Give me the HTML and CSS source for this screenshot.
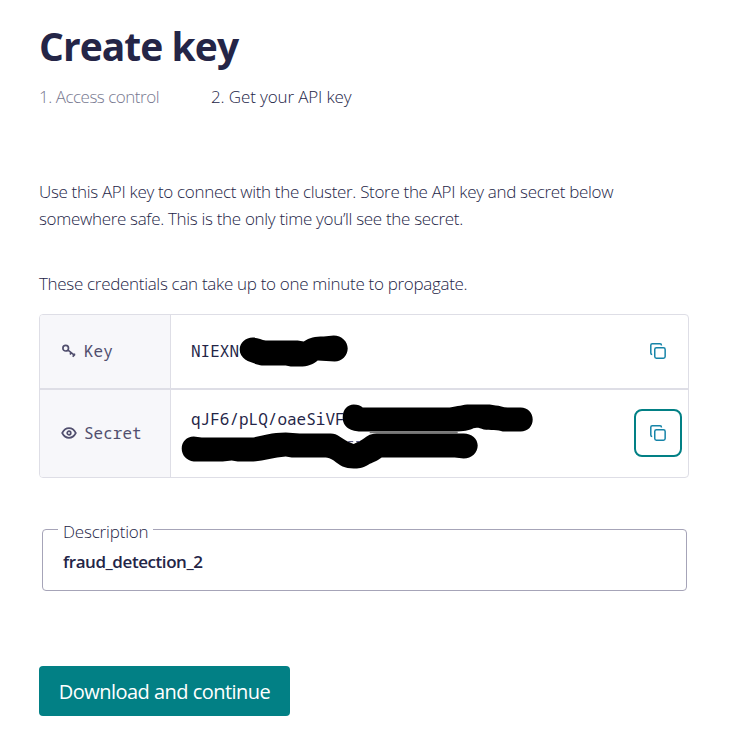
FILE: index.html
```html
<!DOCTYPE html>
<html lang="en">
<head>
<meta charset="utf-8">
<title>Create key</title>
<link rel="stylesheet" href="styles.css">
</head>
<body>
<main class="page">
  <h1 class="title">Create key</h1>
  <nav class="steps">
    <span class="step step-done">1. Access control</span>
    <span class="step">2. Get your API key</span>
  </nav>
  <p class="intro">Use this API key to connect with the cluster. Store the API key and secret below<br>somewhere safe. This is the only time you’ll see the secret.</p>
  <p class="note">These credentials can take up to one minute to propagate.</p>

  <section class="credentials">
    <div class="row row-key">
      <div class="label">
        <svg class="icon" width="16" height="16" viewBox="0 0 16 16" fill="none" stroke="currentColor" stroke-width="1.7"><circle cx="4.7" cy="5.2" r="2.8"/><path d="M7 7.2L13.9 12.7M10.4 9.6L9 11.6M13.8 10.6L11.8 13.8"/></svg>
        <span>Key</span>
      </div>
      <div class="value">
        <code>NIEXN</code>
        <svg class="redaction" width="518" height="73" viewBox="171.3 315.4 518 73"><path d="M240 350C240 343 246 338 253 338C258 338 262 340 266 341H298L304 342C310 338 315 337 324 337L334 336C342 336 348 342 348 349C348 356 342 362 335 362L318 361C313 365 308 367 300 367H291L286 366H262C256 364 240 362 240 350Z"/></svg>
        <button class="copy" type="button" aria-label="Copy key"><svg width="16" height="16" viewBox="0 0 16 16" fill="none" stroke="currentColor" stroke-width="1.5"><rect x="4.75" y="4.75" width="10.4" height="10.4" rx="1.7"/><path d="M2.2 11.5Q.8 11.5.8 10V2.2Q.8.8 2.2.8H10Q11.5.8 11.5 2.4"/></svg></button>
      </div>
    </div>
    <div class="row row-secret">
      <div class="label">
        <svg class="icon" width="16" height="16" viewBox="0 0 16 16" fill="none" stroke="currentColor" stroke-width="1.7"><path d="M1.2 8Q3.7 3.2 8 3.2T14.8 8Q12.3 12.8 8 12.8T1.2 8Z"/><circle cx="8" cy="8" r="1.8"/></svg>
        <span>Secret</span>
      </div>
      <div class="value">
        <code>qJF6/pLQ/oaeSiVF</code>
        <svg class="redaction" width="518" height="87" viewBox="171.3 390.4 518 87"><path d="M343 418C343 410 348 405 354 405C358 405 361 406 363 408H450C458 407 463 405 470 405H490L496 406C500 406 503 408 508 408H521C528 408 533 413 533 420C533 427 528 432 521 432H503C499 430 490 431 484 430C478 427 474 428 471 430C464 432 458 432 452 432H362C355 432 343 430 343 418Z"/><path class="overlap" d="M370 432.9H458"/><path d="M182 449C182 442 187 437 194 437L202 438H251C263 437 270 433 286 433L300 434H331C338 434 342 439 348 442L354 444.5L361 441C367 437 369 434 377 433.8H464C472 434 478 439 478 446C478 453 472 459 464 459L455 458H382C377 462 372 463 369 465C363 469 358 469 354 469C345 469 340 466 334 461C331 459 328 458 326 458H292L286 457C273 458 263 462 251 462H238L232 461L223 462H194C187 461 182 456 182 449Z"/><path class="remnant" d="M348.5 442H353.5M356.5 442H360"/></svg>
        <button class="copy copy-focus" type="button" aria-label="Copy secret"><svg width="16" height="16" viewBox="0 0 16 16" fill="none" stroke="currentColor" stroke-width="1.5"><rect x="4.75" y="4.75" width="10.4" height="10.4" rx="1.7"/><path d="M2.2 11.5Q.8 11.5.8 10V2.2Q.8.8 2.2.8H10Q11.5.8 11.5 2.4"/></svg></button>
      </div>
    </div>
  </section>

  <fieldset class="field">
    <legend>Description</legend>
    <div class="field-value">fraud_detection_2</div>
  </fieldset>

  <button class="primary" type="button">Download and continue</button>
</main>
</body>
</html>
```
FILE: styles.css
```css
* { box-sizing: border-box; }
body {
  margin: 0;
  background: #fff;
  color: #242547;
  font-family: "Open Sans", "Noto Sans", sans-serif;
}
.page { width: 738px; padding: 18px 49px 29px 39px; }
.title { margin: 0; font-size: 39px; line-height: 55px; font-weight: 700; letter-spacing: -.95px; }
.steps { display: flex; gap: 52px; margin-top: 10px; font-size: 17px; line-height: 28px; font-weight: 300; }
.step { letter-spacing: -.13px; }
.step-done { color: #77788f; letter-spacing: -.49px; }
.intro { margin: 67px 0 0; font-size: 17px; line-height: 27px; font-weight: 300; white-space: nowrap; letter-spacing: -.32px; }
.note { margin: 38px 0 0; font-size: 17px; line-height: 27px; font-weight: 300; letter-spacing: -.31px; }
.credentials {
  margin-top: 17px;
  border: 1px solid #dedee6;
  border-radius: 4px;
  overflow: hidden;
  font-size: 16px;
}
.row { display: flex; }
.row-key { height: 73px; }
.row-secret { height: 89px; border-top: 2px solid #dedee6; }
.label {
  width: 131px;
  display: flex;
  align-items: center;
  gap: 7px;
  padding: 0 0 2px 21px;
  border-right: 1px solid #dedee6;
  background: #f7f7fa;
  color: #514f6e;
  font-family: "Noto Sans Mono", "DejaVu Sans Mono", monospace;
}
.value {
  position: relative;
  flex: 1;
  display: flex;
  justify-content: space-between;
  align-items: center;
  padding: 0 6px 2px 20px;
}
code { font: 16px/28px "Noto Sans Mono", "DejaVu Sans Mono", monospace; }
.row-secret code { align-self: flex-start; margin-top: 15px; }
.redaction { position: absolute; left: 0; top: 0; fill: #000; }
.overlap { stroke: #777; stroke-width: 1.5; }
.remnant { stroke: #4a4c78; stroke-width: 1; }
.copy {
  width: 48px;
  height: 48px;
  display: grid;
  place-items: center;
  padding: 0;
  border: 2px solid transparent;
  border-radius: 8px;
  background: none;
  color: #1684a8;
}
.copy-focus { border-color: #028085; }
.field {
  margin: 42px 2px 0 3px;
  height: 71px;
  padding: 0 20px;
  border: 1px solid #a6a4b8;
  border-radius: 4px;
}
.field legend { height: 19px; margin-left: -5px; padding: 0 5px; font-size: 17px; line-height: 24px; font-weight: 300; letter-spacing: -.18px; }
.field-value { font-size: 17px; line-height: 24px; font-weight: 600; letter-spacing: -.43px; margin-top: 11px; }
.primary {
  display: block;
  width: 251px;
  height: 50px;
  margin-top: 75px;
  padding: 2px 0 0;
  border: 0;
  border-radius: 4px;
  background: #028085;
  color: #fff;
  font: 400 20px/28px "Open Sans", "Noto Sans", sans-serif;
  letter-spacing: -.52px;
}
```
